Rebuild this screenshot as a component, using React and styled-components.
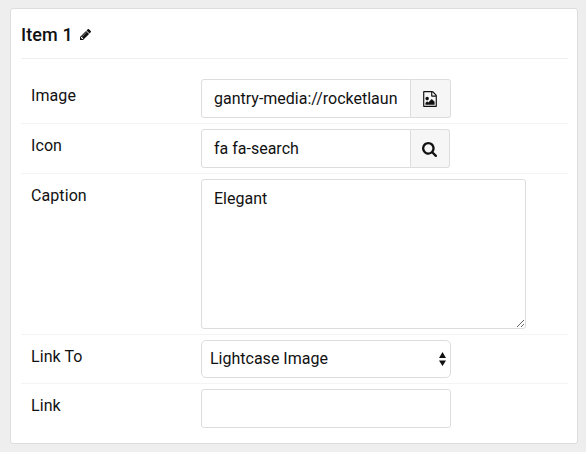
import React from 'react';
import styled, { createGlobalStyle } from 'styled-components';

const GlobalStyle = createGlobalStyle`
  *, *::before, *::after { box-sizing: border-box; }
  body {
    margin: 0;
    background: #eee;
    color: #111;
    font: 16px/24px Roboto, sans-serif;
  }
`;

const Page = styled.main`
  padding: 8px 8px 8px 10px;
`;

const Card = styled.section`
  height: 436px;
  padding: 0 9px 0 10px;
  background: #fff;
  border: 1px solid #ddd;
  border-radius: 3px;
`;

const CardHeader = styled.header`
  display: flex;
  align-items: center;
  gap: 7px;
  height: 50px;
  margin-bottom: 15px;
  padding-top: 2px;
  border-bottom: 1px solid #eee;
`;

const Title = styled.h4`
  margin: 0;
  font-size: 18px;
  font-weight: 500;
  letter-spacing: 0.1px;
`;

const Row = styled.div`
  display: flex;
  align-items: flex-start;
  padding: 5px 0 5px 10px;
  border-bottom: 1px solid ${(p) => (p.$last ? 'transparent' : '#f4f4f4')};
`;

const Label = styled.label`
  width: 170px;
  padding-top: 5px;
  letter-spacing: 0.08px;
`;

const Group = styled.div`
  display: flex;
  width: ${(p) => p.$width}px;
  height: 39px;
`;

const Input = styled.input`
  flex: 1;
  min-width: 0;
  width: 250px;
  height: 39px;
  padding: 0 12px;
  border: 1px solid #ddd;
  border-radius: ${(p) => (p.$joined ? '3px 0 0 3px' : '3px')};
  background: #fff;
  color: inherit;
  font: inherit;
  outline: none;
`;

const AddonButton = styled.button`
  display: grid;
  place-items: center;
  width: ${(p) => p.$width}px;
  padding: ${(p) => p.$padding};
  border: 1px solid #ddd;
  border-left: 0;
  border-radius: 0 3px 3px 0;
  background: #f6f6f6;
  color: #111;
`;

const TextArea = styled.textarea`
  display: block;
  width: 325px;
  height: 150px;
  padding: 7px 12px;
  border: 1px solid #ddd;
  border-radius: 3px;
  color: inherit;
  font: inherit;
  outline: none;
  resize: vertical;
`;

const SelectBox = styled.button`
  display: flex;
  align-items: center;
  justify-content: space-between;
  width: 250px;
  height: 38px;
  padding: 0 4px 0 8px;
  border: 1px solid #ddd;
  border-radius: 5px;
  background: #fff;
  color: inherit;
  font: inherit;
`;

const Glyph = styled.svg`
  display: block;
  fill: currentColor;
`;

const PencilIcon = () => (
  <Glyph width="11" height="11" viewBox="0 149 1515 1515">
    <path d="M363 1536l91-91-235-235-91 91v107h128v128h107zM886 608q0-22-22-22-10 0-17 7l-542 542q-7 7-7 17 0 22 22 22 10 0 17-7l542-542q7-7 7-17zM832 416l416 416-832 832h-416v-416zM1515 512q0 53-37 90l-166 166-416-416 166-165q36-38 90-38 53 0 91 38l235 234q37 39 37 91z" />
  </Glyph>
);

const ImageFileIcon = () => (
  <Glyph width="14" height="16" viewBox="0 0 1536 1792">
    <path d="M1468 380q28 28 48 76t20 88v1152q0 40-28 68t-68 28h-1344q-40 0-68-28t-28-68v-1600q0-40 28-68t68-28h896q40 0 88 20t76 48zm-444-244v376h376q-10-29-22-41l-313-313q-12-12-41-22zm384 1528v-1024h-416q-40 0-68-28t-28-68v-416h-768v1536h1280zm-128-448v320h-1024v-192l192-192 128 128 384-384zm-832-192q-80 0-136-56t-56-136 56-136 136-56 136 56 56 136-56 136-136 56z" />
  </Glyph>
);

const SearchIcon = () => (
  <Glyph width="15" height="15" viewBox="0 0 1664 1664">
    <path d="M1152 704q0-185-131.5-316.5t-316.5-131.5-316.5 131.5-131.5 316.5 131.5 316.5 316.5 131.5 316.5-131.5 131.5-316.5zm512 832q0 52-38 90t-90 38q-54 0-90-38l-343-342q-179 124-399 124-143 0-273.5-55.5t-225-150-150-225-55.5-273.5 55.5-273.5 150-225 225-150 273.5-55.5 273.5 55.5 225 150 150 225 55.5 273.5q0 220-124 399l343 343q37 37 37 90z" />
  </Glyph>
);

const SortIcon = () => (
  <Glyph width="7" height="14" viewBox="0 0 7 14">
    <path d="M3.5 0L7 6H0zM0 8.5h7l-3.5 5.5z" />
  </Glyph>
);

export default function App() {
  return (
    <>
      <GlobalStyle />
      <Page>
        <Card>
          <CardHeader>
            <Title>Item 1</Title>
            <PencilIcon />
          </CardHeader>
          <Row>
            <Label htmlFor="image">Image</Label>
            <Group $width={250}>
              <Input id="image" $joined defaultValue="gantry-media://rocketlaun" />
              <AddonButton $width={40} $padding="0 2px 0 0" aria-label="Pick image"><ImageFileIcon /></AddonButton>
            </Group>
          </Row>
          <Row>
            <Label htmlFor="icon">Icon</Label>
            <Group $width={249}>
              <Input id="icon" $joined defaultValue="fa fa-search" />
              <AddonButton $width={39} $padding="2px 2px 0 0" aria-label="Pick icon"><SearchIcon /></AddonButton>
            </Group>
          </Row>
          <Row>
            <Label htmlFor="caption">Caption</Label>
            <TextArea id="caption" defaultValue="Elegant" />
          </Row>
          <Row>
            <Label htmlFor="linkto">Link To</Label>
            <SelectBox id="linkto">
              Lightcase Image
              <SortIcon />
            </SelectBox>
          </Row>
          <Row $last>
            <Label htmlFor="link">Link</Label>
            <Group $width={250}>
              <Input id="link" />
            </Group>
          </Row>
        </Card>
      </Page>
    </>
  );
}
